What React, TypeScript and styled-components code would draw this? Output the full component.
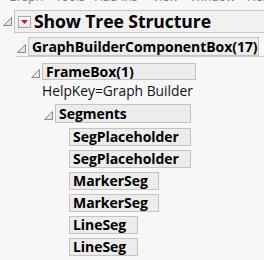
import React, { FC, ReactNode } from 'react'
import styled, { createGlobalStyle } from 'styled-components'

const GlobalStyle = createGlobalStyle`
	html, body {
		margin: 0;
		padding: 0;
		background: #f7f7f7;
	}
	body {
		font-family: 'Open Sans', 'Noto Sans', sans-serif;
		color: #000;
	}
`

const Page = styled.div`
	width: 264px;
	height: 260px;
	overflow: hidden;
`

const MenuStrip = styled.div`
	height: 4px;
	overflow: hidden;
	display: flex;
	align-items: flex-end;
	font-family: 'Open Sans', sans-serif;
	font-size: 12px;
	color: #777;
`
const MenuItems = styled.div`
	display: flex;
	line-height: 12px;
	margin-bottom: 1px;
`
const MenuItem = styled.span<{ $w: number }>`
	width: ${(p) => p.$w}px;
	flex: none;
`

const Header = styled.div`
	display: flex;
	align-items: center;
	margin-top: 6px;
	padding-left: 3px;
`
const HeaderBox = styled.div`
	flex: 1;
	display: flex;
	align-items: center;
	height: 21px;
	margin-left: 2px;
	border: 1px solid #c6c6c6;
	border-right: none;
	background: #f1f1f1;
	padding-left: 3px;
	gap: 3px;
`
const HeaderTitle = styled.span`
	font-family: 'Open Sans', sans-serif;
	font-weight: 700;
	font-size: 17.6px;
	letter-spacing: -0.1px;
	line-height: 21px;
`
const RedButton = styled.div`
	width: 11px;
	height: 10px;
	border: 1px solid #a8a8a8;
	background: linear-gradient(#ffffff, #e8e8e8);
	display: flex;
	align-items: center;
	justify-content: center;
	margin-top: 1px;
`

const Node = styled.div<{ $indent: number }>`
	margin-left: ${(p) => p.$indent}px;
`
const NodeRow = styled.div<{ $top: number }>`
	display: flex;
	align-items: center;
	margin-top: ${(p) => p.$top}px;
`
const Twisty = styled.div`
	width: 11px;
	flex: none;
	display: flex;
	align-items: flex-end;
	padding-top: 3px;
`
const LabelBox = styled.div<{ $w?: number; $h: number }>`
	box-sizing: border-box;
	height: ${(p) => p.$h}px;
	${(p) => (p.$w ? `width: ${p.$w}px;` : '')}
	border: 1px solid #c3c3c3;
	background: #ececec;
	padding: 0 6px 0 3px;
	font-family: 'Open Sans', sans-serif;
	font-weight: 700;
	font-size: 14px;
	letter-spacing: -0.05px;
	line-height: ${(p) => p.$h - 2}px;
	white-space: nowrap;
	overflow: hidden;
`
const Children = styled.div<{ $rule?: boolean }>`
	${(p) => (p.$rule ? 'border-top: 1px solid #cdcdcd; margin-left: -1px; padding-left: 1px;' : '')}
`
const HelpText = styled.div`
	margin-left: 11px;
	margin-top: 3px;
	font-family: 'Open Sans', sans-serif;
	font-size: 13.8px;
	line-height: 16px;
	color: #101020;
`
const LeafList = styled.div`
	margin-left: 25px;
	display: flex;
	flex-direction: column;
	align-items: flex-start;
	gap: 4px;
	margin-top: 5px;
`

const Triangle: FC = () => (
	<svg width='9' height='9' viewBox='0 0 9 9'>
		<polygon points='8.5,0.5 8.5,8.5 0.5,8.5' fill='#e4e4e4' stroke='#8a8a8a' strokeWidth='1' />
	</svg>
)

const Branch: FC<{ label: string; w?: number; h: number; top: number; children?: ReactNode }> = ({
	label,
	w,
	h,
	top,
	children,
}) => (
	<>
		<NodeRow $top={top}>
			<Twisty>
				<Triangle />
			</Twisty>
			<LabelBox $w={w} $h={h}>
				{label}
			</LabelBox>
		</NodeRow>
		{children}
	</>
)

const leaves = [
	{ label: 'SegPlaceholder', w: 122 },
	{ label: 'SegPlaceholder', w: 122 },
	{ label: 'MarkerSeg', w: 90 },
	{ label: 'MarkerSeg', w: 90 },
	{ label: 'LineSeg', w: 69 },
	{ label: 'LineSeg', w: 69 },
]

const App: FC = () => (
	<Page>
		<GlobalStyle />
		<MenuStrip>
			<MenuItems>
				<MenuItem $w={8} />
				<MenuItem $w={47}>Graph</MenuItem>
				<MenuItem $w={40}>Tools</MenuItem>
				<MenuItem $w={57}>Add-Ins</MenuItem>
				<MenuItem $w={38}>View</MenuItem>
				<MenuItem $w={57}>Window</MenuItem>
				<MenuItem $w={30}>Help</MenuItem>
			</MenuItems>
		</MenuStrip>

		<Header>
			<Triangle />
			<HeaderBox>
				<RedButton>
					<svg width='7' height='4' viewBox='0 0 7 4'>
						<polygon points='0,0 7,0 3.5,4' fill='#e0101c' />
					</svg>
				</RedButton>
				<HeaderTitle>Show Tree Structure</HeaderTitle>
			</HeaderBox>
		</Header>

		<Node $indent={17}>
			<Branch label='GraphBuilderComponentBox(17)' w={231} h={19} top={4}>
				<Children $rule>
					<Node $indent={14}>
						<Branch label='FrameBox(1)' w={154} h={17} top={6}>
							<HelpText>HelpKey=Graph Builder</HelpText>
							<Node $indent={13}>
								<Branch label='Segments' w={136} h={19} top={5}>
									<LeafList>
										{leaves.map((l, i) => (
											<LabelBox key={i} $w={l.w} $h={18}>
												{l.label}
											</LabelBox>
										))}
									</LeafList>
								</Branch>
							</Node>
						</Branch>
					</Node>
				</Children>
			</Branch>
		</Node>
	</Page>
)

export default App
